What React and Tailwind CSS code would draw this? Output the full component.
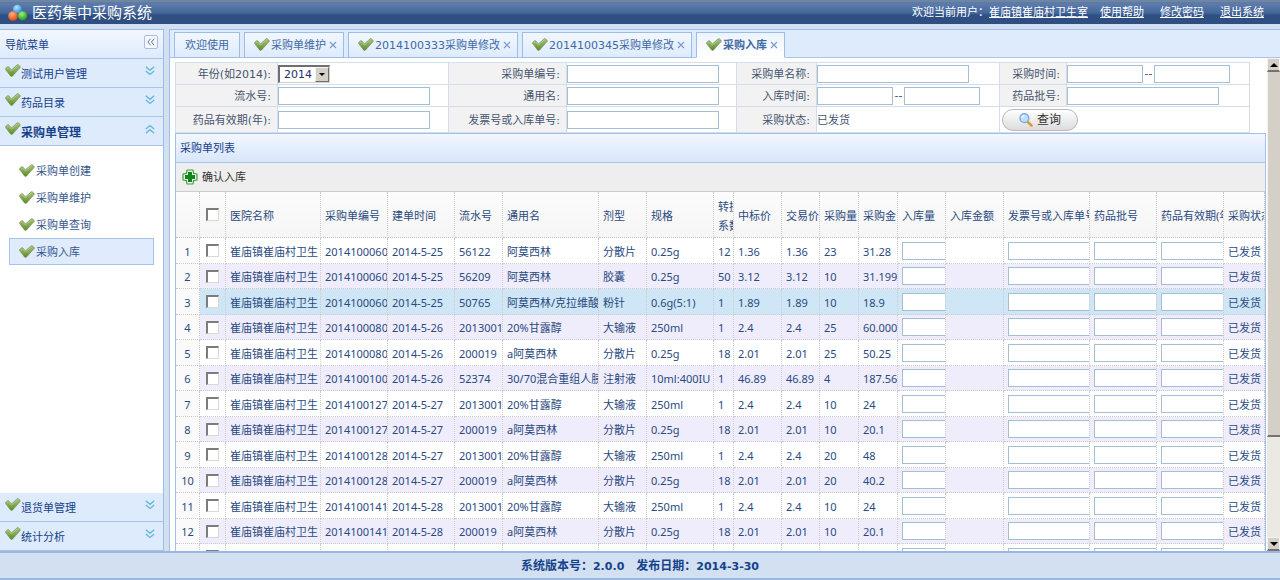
import { useState } from "react";

const columns = [
  { title: "医院名称", width: "w-[95px]" },
  { title: "采购单编号", width: "w-[67px]" },
  { title: "建单时间", width: "w-[67px]" },
  { title: "流水号", width: "w-[48px]" },
  { title: "通用名", width: "w-[96px]" },
  { title: "剂型", width: "w-[48px]" },
  { title: "规格", width: "w-[67px]" },
  { title: "转换系数", width: "w-[20px]" },
  { title: "中标价", width: "w-[48px]" },
  { title: "交易价", width: "w-[38px]" },
  { title: "采购量", width: "w-[39px]" },
  { title: "采购金", width: "w-[39px]" },
  { title: "入库量", width: "w-[48px]", input: true },
  { title: "入库金额", width: "w-[58px]" },
  { title: "发票号或入库单号", width: "w-[86px]", input: true },
  { title: "药品批号", width: "w-[67px]", input: true },
  { title: "药品有效期(年)", width: "w-[67px]", input: true },
  { title: "采购状态", width: "" },
];

const hospital = "崔庙镇崔庙村卫生";

// values for the columns from 采购单编号 to 采购金
const orders = [
  ["2014100060", "2014-5-25", "56122", "阿莫西林", "分散片", "0.25g", "12", "1.36", "1.36", "23", "31.28"],
  ["2014100060", "2014-5-25", "56209", "阿莫西林", "胶囊", "0.25g", "50", "3.12", "3.12", "10", "31.199"],
  ["2014100060", "2014-5-25", "50765", "阿莫西林/克拉维酸", "粉针", "0.6g(5:1)", "1", "1.89", "1.89", "10", "18.9"],
  ["2014100080", "2014-5-26", "2013001", "20%甘露醇", "大输液", "250ml", "1", "2.4", "2.4", "25", "60.000"],
  ["2014100080", "2014-5-26", "200019", "a阿莫西林", "分散片", "0.25g", "18", "2.01", "2.01", "25", "50.25"],
  ["2014100100", "2014-5-26", "52374", "30/70混合重组人胰岛素", "注射液", "10ml:400IU", "1", "46.89", "46.89", "4", "187.56"],
  ["2014100127", "2014-5-27", "2013001", "20%甘露醇", "大输液", "250ml", "1", "2.4", "2.4", "10", "24"],
  ["2014100127", "2014-5-27", "200019", "a阿莫西林", "分散片", "0.25g", "18", "2.01", "2.01", "10", "20.1"],
  ["2014100128", "2014-5-27", "2013001", "20%甘露醇", "大输液", "250ml", "1", "2.4", "2.4", "20", "48"],
  ["2014100128", "2014-5-27", "200019", "a阿莫西林", "分散片", "0.25g", "18", "2.01", "2.01", "20", "40.2"],
  ["2014100141", "2014-5-28", "2013001", "20%甘露醇", "大输液", "250ml", "1", "2.4", "2.4", "10", "24"],
  ["2014100141", "2014-5-28", "200019", "a阿莫西林", "分散片", "0.25g", "18", "2.01", "2.01", "10", "20.1"],
];

const tabs = [
  { title: "欢迎使用" },
  { title: "采购单维护", closable: true },
  { title: "2014100333采购单修改", closable: true },
  { title: "2014100345采购单修改", closable: true },
  { title: "采购入库", closable: true },
];

function Tick({ className = "" }) {
  return (
    <svg className={`h-[14px] w-4 shrink-0 ${className}`} viewBox="0 0 16 14" aria-hidden="true">
      <defs>
        <linearGradient id="tick" x1="0" y1="0" x2="0" y2="1">
          <stop offset="0" stopColor="#a3bf7d" />
          <stop offset="0.45" stopColor="#8bad5a" />
          <stop offset="1" stopColor="#5b8a26" />
        </linearGradient>
      </defs>
      <path
        d="M0.6 4.6 L2.6 2.8 Q3.2 2.4 3.8 2.9 L6.4 5.9 L12.2 0.8 Q12.9 0.3 13.5 0.9 L15.2 2.5 Q15.6 3 15.1 3.5 L7.6 12 Q6.5 13 5.5 11.9 L0.6 5.5 Q0.3 5 0.6 4.6Z"
        fill="url(#tick)"
        stroke="#6a8a48"
        strokeWidth="0.6"
      />
      <path d="M1.6 5 L3.2 3.7 L6.4 7 L12.8 1.5" fill="none" stroke="#c3d6a4" strokeWidth="0.6" />
    </svg>
  );
}

function Chevrons({ up }) {
  return (
    <svg
      className={`h-[10px] w-[10px] ${up ? "rotate-180" : ""}`}
      viewBox="0 0 10 10"
      fill="none"
      stroke="#62b4dc"
      strokeWidth="1.3"
      aria-hidden="true"
    >
      <path d="M0.8 0.8 L5 4.3 L9.2 0.8 M0.8 5 L5 8.5 L9.2 5" />
    </svg>
  );
}

function Logo() {
  return (
    <svg className="h-[18px] w-5" viewBox="0 0 20 18" aria-hidden="true">
      <defs>
        <radialGradient id="ballBlue" cx="0.4" cy="0.3" r="0.7">
          <stop offset="0" stopColor="#b9e6ff" />
          <stop offset="1" stopColor="#1f8fe0" />
        </radialGradient>
        <radialGradient id="ballOrange" cx="0.4" cy="0.3" r="0.7">
          <stop offset="0" stopColor="#ffb28a" />
          <stop offset="1" stopColor="#e2490f" />
        </radialGradient>
        <radialGradient id="ballGreen" cx="0.4" cy="0.3" r="0.7">
          <stop offset="0" stopColor="#a4f07a" />
          <stop offset="1" stopColor="#1f9c1c" />
        </radialGradient>
      </defs>
      <circle cx="9.4" cy="5.2" r="4.4" fill="url(#ballBlue)" />
      <circle cx="14.6" cy="11.8" r="4.6" fill="url(#ballGreen)" />
      <circle cx="5" cy="12" r="4.8" fill="url(#ballOrange)" />
    </svg>
  );
}

function SearchIcon() {
  return (
    <svg className="h-[14px] w-[14px]" viewBox="0 0 14 14" aria-hidden="true">
      <path d="M8.6 8.8 L12.6 12.6" stroke="#d9952f" strokeWidth="2.4" strokeLinecap="round" />
      <circle cx="5.4" cy="5.2" r="4.4" fill="#bfe0fb" stroke="#7da9e0" strokeWidth="1.4" />
      <path d="M2.8 5 Q3.2 2.8 5.4 2.6" fill="none" stroke="#fff" strokeWidth="1.2" />
    </svg>
  );
}

function AddIcon() {
  return (
    <svg className="h-4 w-4" viewBox="0 0 16 16" aria-hidden="true">
      <path
        d="M5 1 H11 L11.6 4.4 L15 5 V11 L11.6 11.6 L11 15 H5 L4.4 11.6 L1 11 V5 L4.4 4.4Z"
        fill="#e6f7e4"
        stroke="#3f9f45"
        strokeWidth="1.2"
        strokeLinejoin="round"
      />
      <path d="M6 3 H10 V6 H13 V10 H10 V13 H6 V10 H3 V6 H6Z" fill="#15851b" />
    </svg>
  );
}

function Box({ label, className = "w-[152px]" }) {
  return (
    <input
      type="text"
      aria-label={label}
      className={`block h-[18px] shrink-0 border border-[#a4bed4] bg-white px-1 outline-none ${className}`}
    />
  );
}

function Check({ label }) {
  return (
    <input
      type="checkbox"
      aria-label={label}
      className="mx-auto block h-[13px] w-[13px] appearance-none border border-t-2 border-l-2 border-[#dcd9d2] border-t-[#7c7c7c] border-l-[#7c7c7c] bg-white checked:bg-[#3b6ab5]"
    />
  );
}

function Label({ children }) {
  return (
    <th scope="row" className="border-r border-b border-[#d3deea] bg-[#f2f2f2] pt-[2px] pr-[6px] text-right font-normal whitespace-nowrap">
      {children}
    </th>
  );
}

function Field({ children }) {
  return (
    <td className="border-r border-b border-[#d3deea]">
      <div className="flex items-center">{children}</div>
    </td>
  );
}

function SearchForm() {
  return (
    <table className="w-[1075px] table-fixed border-separate border-spacing-0 border-t border-l border-[#d3deea] text-[#45546f]">
      <colgroup>
        <col className="w-[102px]" />
        <col className="w-[171px]" />
        <col className="w-[118px]" />
        <col className="w-[170px]" />
        <col className="w-[80px]" />
        <col className="w-[183px]" />
        <col className="w-[67px]" />
        <col />
      </colgroup>
      <tbody>
        <tr className="h-[22px]">
          <Label>年份(如2014):</Label>
          <Field>
            <div className="flex h-[18px] w-[52px] border-2 border-r border-b border-[#d4d0c8] border-t-[#6f6f6f] border-l-[#6f6f6f] bg-white">
              <select aria-label="年份" className="min-w-0 grow appearance-none pl-1 leading-none text-[#2b2f66] outline-none">
                <option>2014</option>
                <option>2013</option>
              </select>
              <span className="pointer-events-none flex w-[14px] items-center justify-center border border-[#f5f3ee] border-r-[#6f6f6f] border-b-[#6f6f6f] bg-[#d4d0c8]">
                <span className="border-x-[3px] border-t-[3px] border-x-transparent border-t-black" />
              </span>
            </div>
          </Field>
          <Label>采购单编号:</Label>
          <Field><Box label="采购单编号" /></Field>
          <Label>采购单名称:</Label>
          <Field><Box label="采购单名称" /></Field>
          <Label>采购时间:</Label>
          <Field>
            <Box label="采购时间起" className="w-[76px]" />
            <span className="w-[11px] text-center">--</span>
            <Box label="采购时间止" className="w-[76px]" />
          </Field>
        </tr>
        <tr className="h-[22px]">
          <Label>流水号:</Label>
          <Field><Box label="流水号" /></Field>
          <Label>通用名:</Label>
          <Field><Box label="通用名" /></Field>
          <Label>入库时间:</Label>
          <Field>
            <Box label="入库时间起" className="w-[76px]" />
            <span className="w-[11px] text-center">--</span>
            <Box label="入库时间止" className="w-[76px]" />
          </Field>
          <Label>药品批号:</Label>
          <Field><Box label="药品批号" /></Field>
        </tr>
        <tr className="h-[26px]">
          <Label>药品有效期(年):</Label>
          <Field><Box label="药品有效期(年)" /></Field>
          <Label>发票号或入库单号:</Label>
          <Field><Box label="发票号或入库单号" /></Field>
          <Label>采购状态:</Label>
          <Field><span className="pt-[2px]">已发货</span></Field>
          <td colSpan={2} className="border-r border-b border-[#d3deea] pl-[2px]">
            <button
              type="button"
              className="flex h-[22px] w-[76px] items-center justify-center gap-1 rounded-full border border-[#b9b9b9] bg-linear-to-b from-white to-[#dcdcdc] text-xs text-[#333]"
            >
              <SearchIcon />
              查询
            </button>
          </td>
        </tr>
      </tbody>
    </table>
  );
}

function rowColor(index, selected) {
  if (index === selected) return "bg-[#cfe6f6]";
  return index % 2 ? "bg-[#efedfc]" : "bg-white";
}

function OrderGrid() {
  const [selected, setSelected] = useState(2);
  const cell = "overflow-hidden border-r border-b border-dotted border-[#ccc] p-0 pl-1 text-left font-normal whitespace-nowrap";
  const rows = [...orders, null];

  return (
    <table className="w-full table-fixed border-separate border-spacing-0 font-['Noto_Sans','Noto_Sans_CJK_SC',sans-serif] text-[#2a4a7f]">
      <colgroup>
        <col className="w-[24px]" />
        <col className="w-[26px]" />
        {columns.map((c) => (
          <col key={c.title} className={c.width} />
        ))}
      </colgroup>
      <thead>
        <tr className="h-[46px] bg-linear-to-b from-[#fcfcfc] to-[#f5f5f5]">
          <th className="border-r border-b border-dotted border-[#ccc] border-b-[#c4c4c4]" />
          <th className="border-r border-b border-dotted border-[#ccc] border-b-[#c4c4c4] p-0">
            <Check label="全选" />
          </th>
          {columns.map((c) => (
            <th key={c.title} scope="col" className={`${cell} border-b-[#c4c4c4] pt-[2px] leading-[19px]`}>
              {c.title === "转换系数" ? <>转换<br />系数</> : c.title}
            </th>
          ))}
        </tr>
      </thead>
      <tbody>
        {rows.map((order, i) => (
          <tr key={i} onClick={() => setSelected(i)} className={`odd:h-[26px] even:h-[25px] ${rowColor(i, selected)}`}>
            <td className="border-r border-b border-dotted border-[#ccc] bg-[#fafafa] p-0 pt-[2px] text-center">{order && i + 1}</td>
            <td className="border-r border-b border-dotted border-[#ccc] p-0">
              <Check label={`选择第${i + 1}行`} />
            </td>
            {columns.map((c, n) => (
              <td key={c.title} className={`${cell} ${c.input ? "" : "pt-[2px]"}`}>
                {c.input && <Box label={c.title} className="w-[120px]" />}
                {order && n === 0 && hospital}
                {order && n > 0 && n < 12 && order[n - 1]}
                {order && n === 17 && "已发货"}
              </td>
            ))}
          </tr>
        ))}
      </tbody>
    </table>
  );
}

function Section({ title, open }) {
  return (
    <button
      type="button"
      className={`flex h-[29px] w-full shrink-0 items-center border-b border-[#a9c6ea] bg-[#deebfd] pr-2 pl-[5px] text-left text-[#15428b] ${open ? "text-xs font-bold" : ""}`}
    >
      <Tick className="mb-1" />
      <span className="mt-1 grow">{title}</span>
      <span className="mb-1"><Chevrons up={open} /></span>
    </button>
  );
}

function Sidebar() {
  const [active, setActive] = useState("采购入库");

  return (
    <nav className="flex w-[164px] shrink-0 flex-col border-t border-r border-[#9dbde6] bg-white">
      <div className="flex h-[29px] shrink-0 items-center justify-between border-b border-[#a9c6ea] bg-linear-to-b from-[#f2f7ff] to-[#deebfd] px-[5px] text-[#15428b]">
        <span className="mt-1">导航菜单</span>
        <button
          type="button"
          aria-label="收起"
          className="mb-1 flex h-[14px] w-[14px] items-center justify-center rounded-xs border border-[#a9bfdc] bg-[#f4f8ff]"
        >
          <svg className="h-[8px] w-[8px]" viewBox="0 0 8 8" fill="none" stroke="#5d7599" aria-hidden="true">
            <path d="M3.6 0.8 L0.8 4 L3.6 7.2 M7.2 0.8 L4.4 4 L7.2 7.2" />
          </svg>
        </button>
      </div>
      <Section title="测试用户管理" />
      <Section title="药品目录" />
      <Section title="采购单管理" open />
      <ul className="grow px-[9px] pt-[11px]">
        {["采购单创建", "采购单维护", "采购单查询", "采购入库"].map((name) => (
          <li key={name}>
            <a
              href="#"
              onClick={(e) => {
                e.preventDefault();
                setActive(name);
              }}
              className={`flex h-[27px] items-center border pl-[9px] text-[#36568c] ${active === name ? "border-[#a5c4ea] bg-[#e0ecfe]" : "border-transparent"}`}
            >
              <Tick className="mr-px" />
              <span className="pt-[2px]">{name}</span>
            </a>
          </li>
        ))}
      </ul>
      <Section title="退货单管理" />
      <Section title="统计分析" />
    </nav>
  );
}

function Tabs() {
  const [active, setActive] = useState(4);

  return (
    <div className="flex h-[28px] shrink-0 items-end gap-1 border-b border-[#a9c6ea] bg-[#deebfd] pl-1">
      {tabs.map((tab, i) => (
        <div
          key={tab.title}
          className={`-mb-px flex h-[26px] items-center border border-[#9dbde6] ${
            i === active ? "border-b-white bg-linear-to-b from-[#edf4ff] to-white font-bold" : "bg-linear-to-b from-[#f2f7ff] to-[#deebfd]"
          } ${tab.closable ? "pr-[6px] pl-[9px]" : "px-[10px]"}`}
        >
          <button type="button" onClick={() => setActive(i)} className="flex items-center whitespace-nowrap text-[#416aa3]">
            {tab.closable && <Tick className="mr-px" />}
            <span className="pt-[2px]">{tab.title}</span>
          </button>
          {tab.closable && (
            <button type="button" aria-label={`关闭${tab.title}`} className="ml-[3px]">
              <svg className="h-[8px] w-[8px]" viewBox="0 0 8 8" stroke="#7f9cc4" strokeWidth="1.2" aria-hidden="true">
                <path d="M1 1 L7 7 M7 1 L1 7" />
              </svg>
            </button>
          )}
        </div>
      ))}
    </div>
  );
}

function ScrollBar() {
  const button = "flex h-[14px] shrink-0 items-center justify-center border border-[#f5f3ee] border-b-2 border-b-[#77736b] bg-[#d4d0c8]";
  return (
    <div className="flex w-[13px] shrink-0 flex-col bg-[#ebe9e4]" aria-hidden="true">
      <div className={button}>
        <span className="border-x-4 border-b-4 border-x-transparent border-b-black" />
      </div>
      <div className="h-[74%] border-b-2 border-l border-l-[#f5f3ee] border-b-[#77736b] bg-[#d4d0c8]" />
      <div className="grow" />
      <div className={button}>
        <span className="border-x-4 border-t-4 border-x-transparent border-t-black" />
      </div>
    </div>
  );
}

export default function App() {
  return (
    <div className="flex h-screen flex-col overflow-hidden bg-[#d2e0f2] font-['DejaVu_Sans','Noto_Sans_CJK_SC',sans-serif] text-[11px] leading-[14px]">
      <header className="flex h-[24px] shrink-0 items-center justify-between border-t-2 border-[#6f86a0] bg-linear-to-b from-[#5c7bab] from-10% via-[#44669b] via-50% to-[#2f4f82] to-60% pr-4 pl-2 text-white">
        <h1 className="flex items-center gap-1 text-[15px]">
          <Logo />
          医药集中采购系统
        </h1>
        <div className="flex">
          <span>欢迎当前用户：<span className="underline">崔庙镇崔庙村卫生室</span></span>
          <a href="#" className="ml-3 underline">使用帮助</a>
          <a href="#" className="ml-4 underline">修改密码</a>
          <a href="#" className="ml-4 underline">退出系统</a>
        </div>
      </header>

      <div className="mt-[5px] flex min-h-0 grow gap-[5px]">
        <Sidebar />
        <main className="flex min-w-0 grow flex-col border-t border-l border-[#9dbde6] bg-white">
          <Tabs />
          <div className="flex min-h-0 grow">
            <div className="min-w-0 grow overflow-hidden pt-1 pr-px pl-[5px]">
              <SearchForm />
              <section className="border border-[#a3c0e8]">
                <h2 className="flex h-[29px] items-center border-b border-[#a9c6ea] bg-linear-to-b from-[#f2f7ff] to-[#d9e6fb] pt-[2px] pl-1 text-[#15428b]">
                  采购单列表
                </h2>
                <div className="flex h-[29px] items-center border-b border-[#ccc] bg-[#eee] pl-[6px]">
                  <button type="button" className="flex items-center gap-1 text-[#333]">
                    <AddIcon />
                    <span className="pt-[2px]">确认入库</span>
                  </button>
                </div>
                <OrderGrid />
              </section>
            </div>
            <ScrollBar />
          </div>
        </main>
      </div>

      <footer className="flex h-[29px] shrink-0 items-center justify-center gap-3 border-y-2 border-[#9ab6e2] font-bold whitespace-nowrap text-[#15428b]">
        <span><span className="text-xs">系统版本号：</span>2.0.0</span>
        <span><span className="text-xs">发布日期：</span>2014-3-30</span>
      </footer>
    </div>
  );
}
